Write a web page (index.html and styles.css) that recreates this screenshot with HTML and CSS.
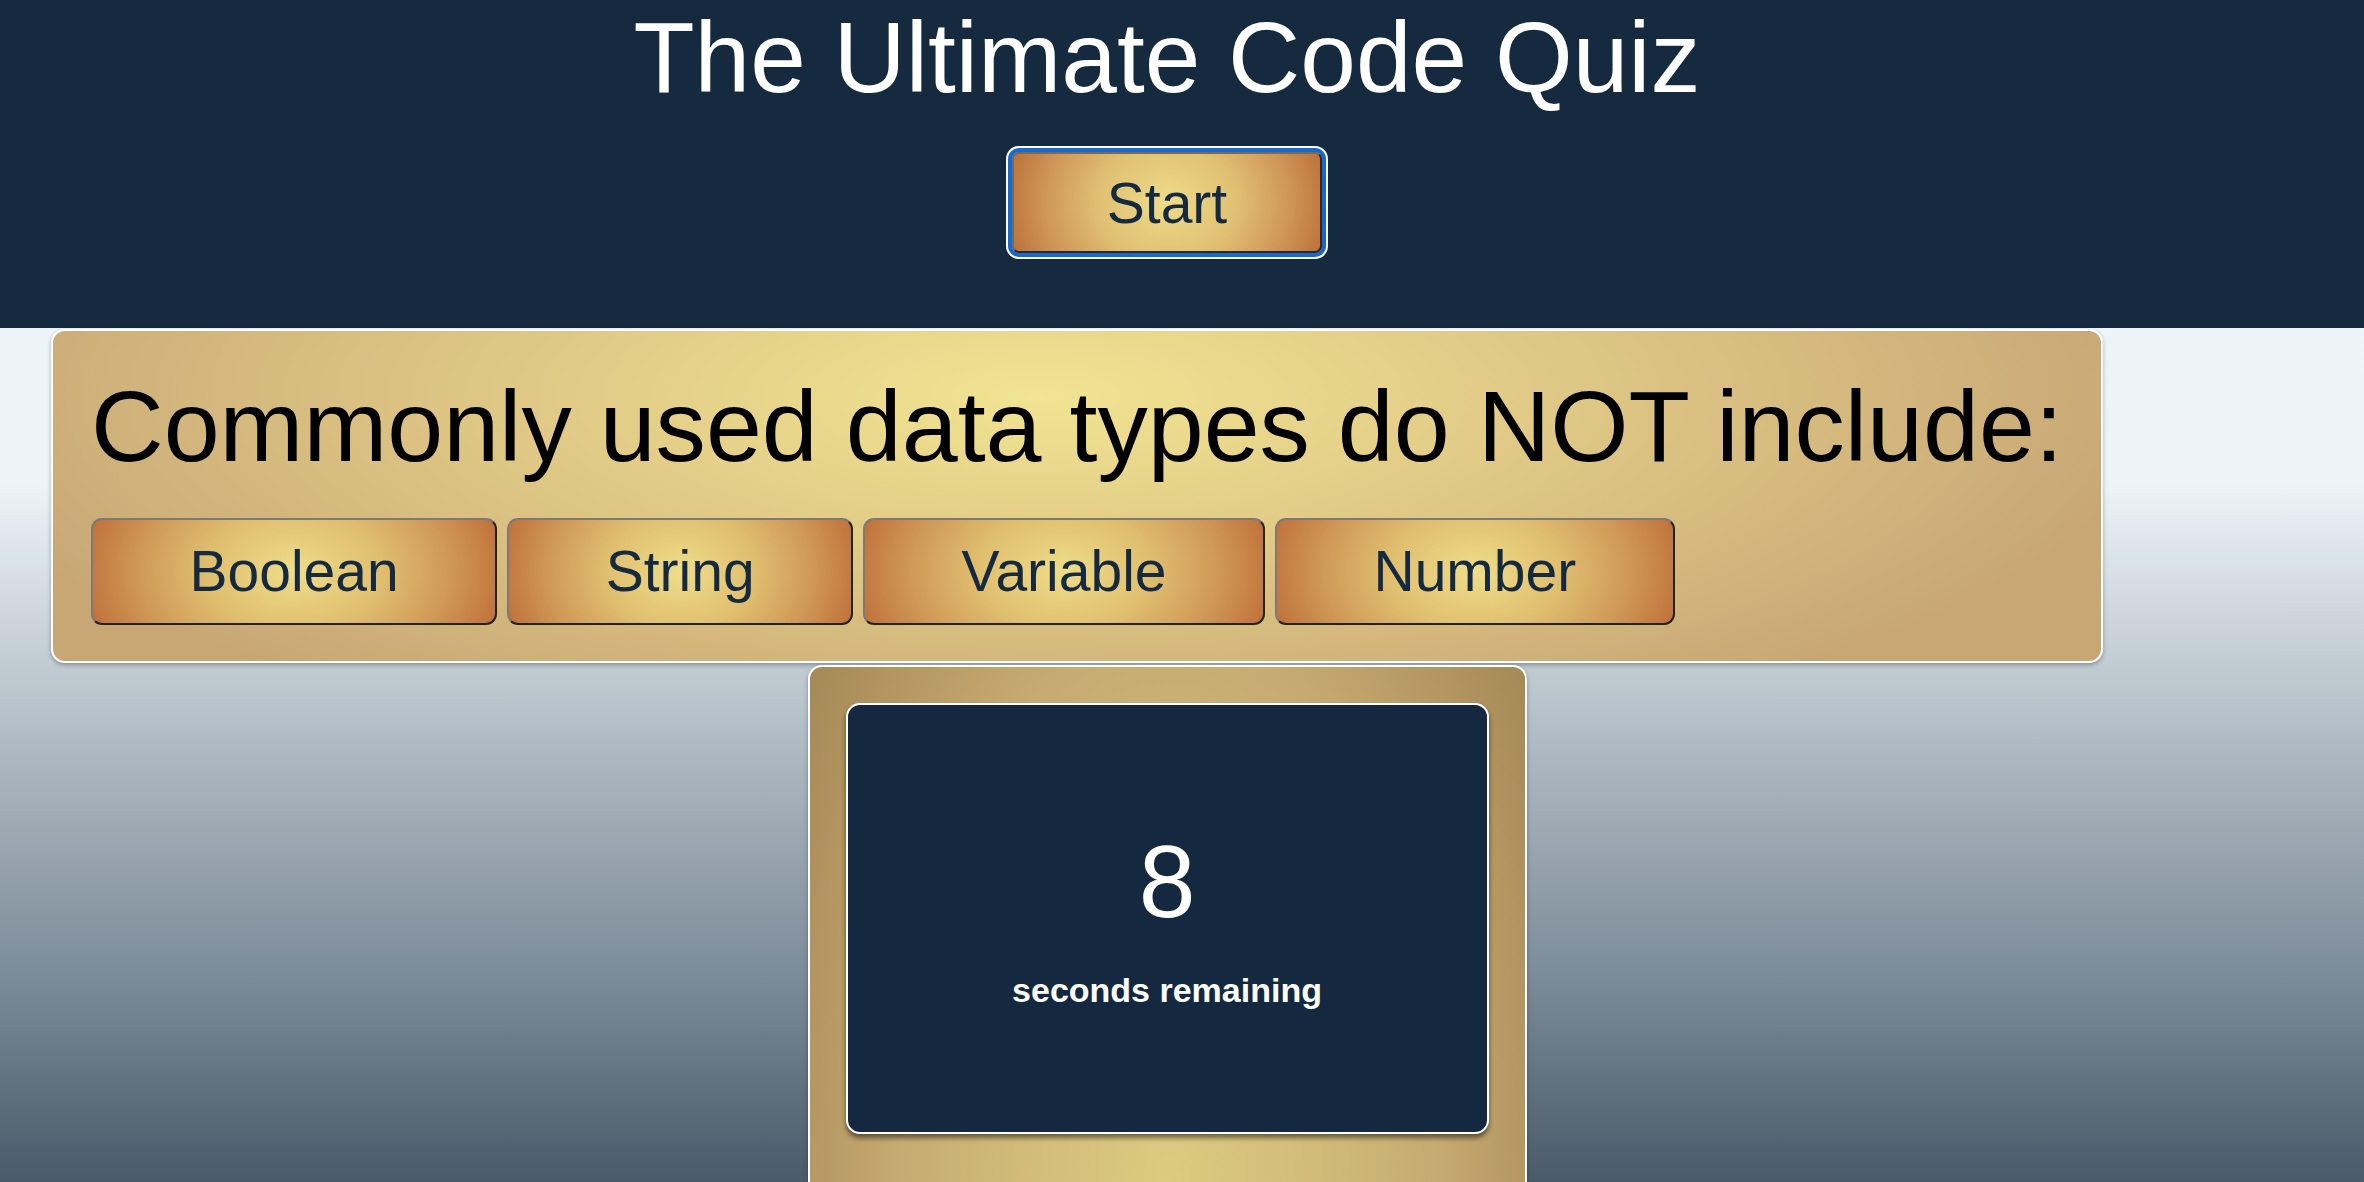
FILE: index.html
```html
<!DOCTYPE html>
<html lang="en">
<head>
<meta charset="utf-8">
<title>The Ultimate Code Quiz</title>
<link rel="stylesheet" href="styles.css">
</head>
<body>
<header class="site-header">
  <div class="header-inner">
    <h1 class="title">The Ultimate Code Quiz</h1>
    <button class="start-btn" type="button">Start</button>
  </div>
</header>
<main class="main">
  <section class="question-card">
    <h2 class="question">Commonly used data types do NOT include:</h2>
    <div class="answers">
      <button class="answer" type="button">Boolean</button>
      <button class="answer" type="button">String</button>
      <button class="answer" type="button">Variable</button>
      <button class="answer" type="button">Number</button>
    </div>
  </section>
  <div class="timer-wrap">
    <section class="timer-card">
      <div class="timer-box">
        <div class="timer-num">8</div>
        <div class="timer-label">seconds remaining</div>
      </div>
    </section>
  </div>
</main>
</body>
</html>
```

FILE: styles.css
```css
html, body {
  margin: 0;
  padding: 0;
  overflow: hidden;
}

body {
  font-family: "Liberation Sans", Arial, sans-serif;
  min-height: 1182px;
  background: linear-gradient(to bottom,
    #eef5f9 0px,
    #edf4f8 485px,
    #c9d3d9 630px,
    #a9b5be 770px,
    #7f8e9b 965px,
    #4b5a6a 1182px);
}

.site-header {
  background: #15293f;
  height: 328px;
}

.header-inner {
  padding-right: 30px;
  display: flex;
  flex-direction: column;
  align-items: center;
}

.title {
  margin: 0;
  font-size: 100px;
  line-height: 115px;
  font-weight: normal;
  color: #ffffff;
}

.start-btn {
  margin-top: 37px;
  width: 310px;
  height: 101px;
  padding: 0;
  font-family: "Liberation Sans", Arial, sans-serif;
  font-size: 57px;
  color: #15293f;
  border: 2px solid;
  border-color: #7a6a50 #2a2a2a #2a2a2a #7a6a50;
  border-radius: 7px;
  background: radial-gradient(ellipse 56% 150% at 50% 50%, #eedc8a 0%, #e1c073 40%, #cf9557 72%, #b86a36 100%);
  box-shadow: 0 0 0 4px #1668d2, 0 0 0 6px #ffffff;
}

.main {
  display: flex;
  flex-direction: column;
  align-items: flex-start;
}

.question-card {
  margin: 1px 0 0 51px;
  padding: 37px 38px 36px 38px;
  border: 2px solid #ffffff;
  border-radius: 14px;
  box-shadow: 0 2px 4px rgba(0, 0, 0, 0.3);
  background: radial-gradient(ellipse 55% 110% at 48% 20%, #f1e492 0%, #e0c986 45%, #c8a775 100%);
}

.question {
  margin: 0;
  font-size: 100.6px;
  line-height: 116px;
  font-weight: normal;
  color: #000000;
  white-space: nowrap;
}

.answers {
  display: flex;
  gap: 10px;
  margin-top: 34px;
  padding-left: 0;
}

.answer {
  font-family: "Liberation Sans", Arial, sans-serif;
  font-size: 57px;
  line-height: 67px;
  padding: 18px 96.5px;
  color: #15293f;
  border: 2px solid;
  border-color: #7a7a7a #222222 #222222 #7a7a7a;
  border-radius: 11px;
  background: radial-gradient(ellipse 56% 150% at 50% 50%, #eedd8a 0%, #e0bf70 38%, #d09a58 68%, #bd6a34 100%);
}

.timer-wrap {
  align-self: stretch;
  padding-right: 30px;
  display: flex;
  justify-content: center;
}

.timer-card {
  margin-top: 2px;
  width: 719px;
  height: 1000px;
  box-sizing: border-box;
  border: 2px solid #ffffff;
  border-radius: 14px;
  padding: 36px 36px 0 36px;
  box-shadow: 0 2px 4px rgba(0, 0, 0, 0.3);
  background: radial-gradient(ellipse 60% 90% at 50% 52%, #dccb80 0%, #d2bb79 35%, #c6ab72 62%, #b39660 85%, #a68a57 100%);
}

.timer-box {
  height: 431px;
  box-sizing: border-box;
  background: #14283f;
  border: 2px solid #ffffff;
  border-radius: 14px;
  box-shadow: 0 4px 5px rgba(0, 0, 0, 0.5);
  display: flex;
  flex-direction: column;
  align-items: center;
  padding-top: 118px;
  gap: 30px;
  color: #ffffff;
}

.timer-num {
  font-size: 102px;
  line-height: 118px;
}

.timer-label {
  font-size: 34px;
  line-height: 39px;
  font-weight: bold;
}
```
